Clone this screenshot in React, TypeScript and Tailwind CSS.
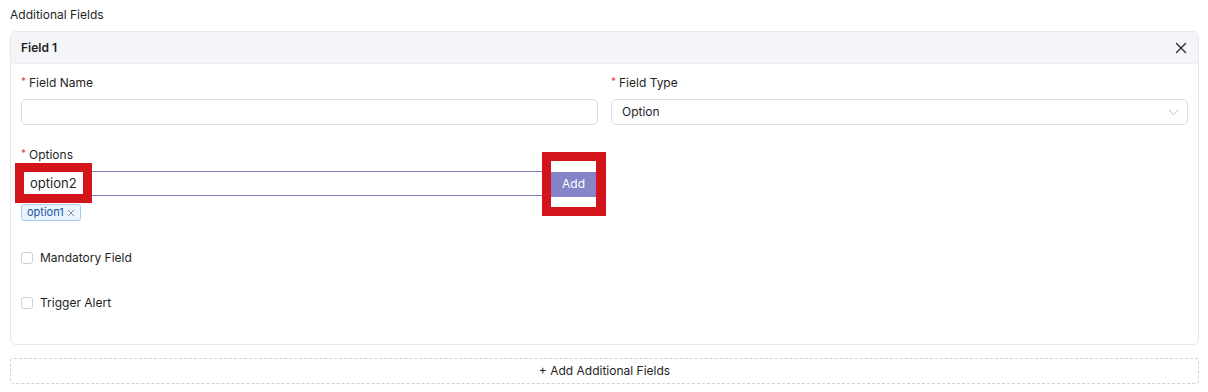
import React from "react";

const Req = () => <span className="text-[#e5484d] mr-[3px] text-[10px] relative top-[-2px]">*</span>;

export default function App() {
  return (
    <div className="w-[1208px] h-[392px] bg-white pl-[10px] pr-[9px] pt-[7px] text-[#1f1f1f]" style={{ fontFamily: "Inter, 'Noto Sans', sans-serif" }}>
      <div className="text-[12px] leading-[16px] h-[16px]">Additional Fields</div>
      <div className="mt-[8px] border border-[#e6e6ee] rounded-[6px] h-[314px] flex flex-col">
        <div className="h-[32px] bg-[#f4f4f9] rounded-t-[6px] border-b border-[#ececf2] flex items-center justify-between pl-[10px] pr-[10px]">
          <span className="text-[12px] font-semibold">Field 1</span>
          <svg width="12" height="12" viewBox="0 0 12 12" className="mr-[1px]">
            <path d="M1.5 1.5 L10.5 10.5 M10.5 1.5 L1.5 10.5" stroke="#222" strokeWidth="1.2" strokeLinecap="round" />
          </svg>
        </div>
        <div className="px-[10px] pt-[11px]">
          <div className="grid grid-cols-2 gap-x-[13px]">
            <div>
              <div className="text-[12px] leading-[16px] h-[16px]"><Req />Field Name</div>
              <div className="mt-[8px] h-[26px] border border-[#dcdce2] rounded-[5px]" />
            </div>
            <div>
              <div className="text-[12px] leading-[16px] h-[16px]"><Req />Field Type</div>
              <div className="mt-[8px] h-[26px] border border-[#dcdce2] rounded-[5px] flex items-center justify-between pl-[10px] pr-[8px]">
                <span className="text-[12px]">Option</span>
                <svg width="11" height="7" viewBox="0 0 11 7">
                  <path d="M0.8 0.8 L5.5 5.8 L10.2 0.8" fill="none" stroke="#bdbdc4" strokeWidth="1" />
                </svg>
              </div>
            </div>
          </div>
          <div className="mt-[22px] text-[12px] leading-[16px] h-[16px]"><Req />Options</div>
          <div className="relative mt-[8px] h-[25px] w-[576px]">
            <div className="absolute left-0 top-0 w-[540px] h-[25px] border-y border-[#7f7fc0]" />
            <div className="absolute left-[-6px] top-[-8px] w-[77px] h-[40px] bg-[#d4141b] p-[9px]">
              <div className="bg-white w-full h-full flex items-center pl-[6px] text-[13px] pt-[1px]">option2</div>
            </div>
            <div className="absolute left-[521px] top-[-19px] w-[64px] h-[64px] bg-[#d4141b] p-[9px] pr-[10px]">
              <div className="bg-white w-full h-full flex items-center">
                <div className="w-full h-[25px] bg-[#8584c8] text-white text-[12px] flex items-center justify-center">Add</div>
              </div>
            </div>
          </div>
          <div className="mt-[8px] flex">
            <div className="h-[17px] px-[5px] border border-[#a7cdf5] bg-[#eaf4ff] rounded-[3px] flex items-center gap-[3px] text-[11px] text-[#1c56a8]">
              option1
              <svg width="8" height="8" viewBox="0 0 8 8"><path d="M1 1 L7 7 M7 1 L1 7" stroke="#8a8a8a" strokeWidth="1" /></svg>
            </div>
          </div>
          <div className="mt-[29px] flex items-center gap-[7px] h-[16px]">
            <div className="w-[12px] h-[12px] border border-[#cfcfd6] rounded-[3px]" />
            <span className="text-[12px]">Mandatory Field</span>
          </div>
          <div className="mt-[29px] flex items-center gap-[7px] h-[16px]">
            <div className="w-[12px] h-[12px] border border-[#cfcfd6] rounded-[3px]" />
            <span className="text-[12px]">Trigger Alert</span>
          </div>
        </div>
      </div>
      <div className="mt-[13px] h-[26px] border border-dashed border-[#d0d0d6] rounded-[4px] flex items-center justify-center text-[12px]">
        + Add Additional Fields
      </div>
    </div>
  );
}
